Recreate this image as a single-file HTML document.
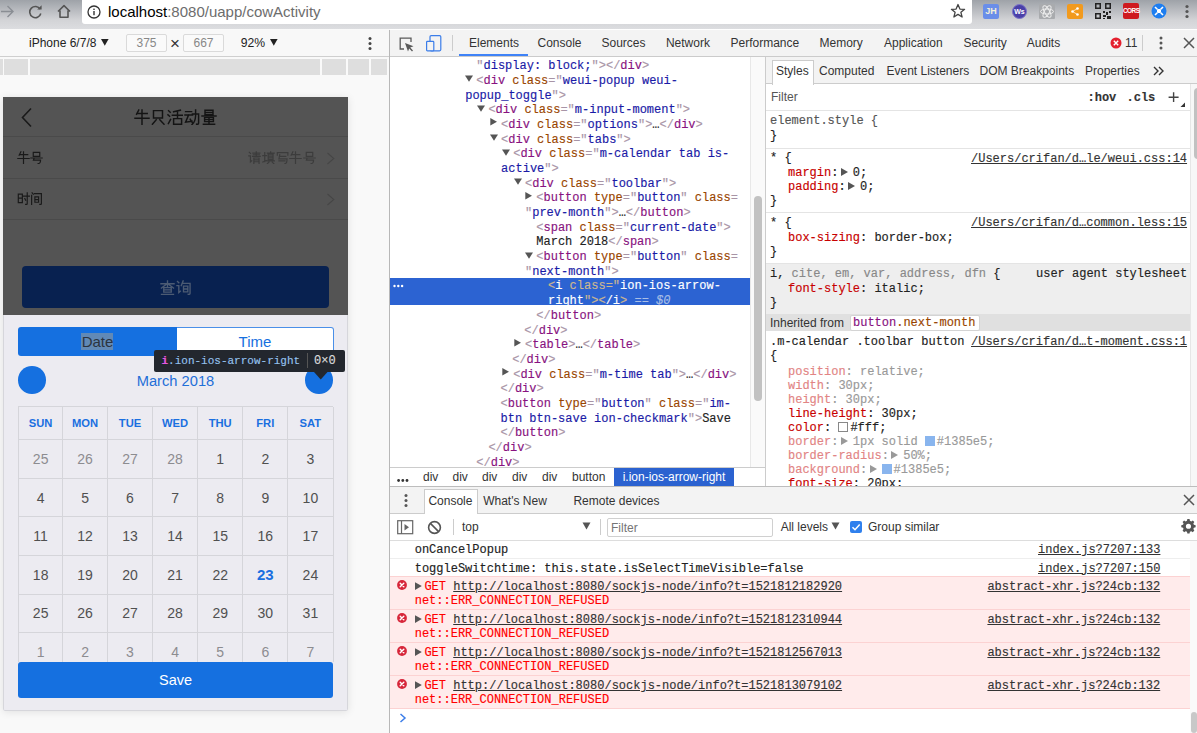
<!DOCTYPE html><html><head><meta charset="utf-8"><style>
*{margin:0;padding:0;box-sizing:border-box}
html,body{width:1197px;height:733px;overflow:hidden;background:#fff;position:relative;font-family:"Liberation Sans",sans-serif;}
.a{position:absolute}
.m{-webkit-text-stroke:0.15px;font-family:"Liberation Mono",monospace;font-size:12px;white-space:pre;position:absolute;line-height:14px}
.s{font-family:"Liberation Sans",sans-serif;white-space:pre;position:absolute}
.tg{color:#881280}.at{color:#994500}.av{color:#1a1aa6}.tx{color:#222}
.pn{color:#c80000}.pv{color:#222}
.dim{opacity:.55}
</style></head><body>
<div class="a" style="left:0;top:0;width:1197px;height:30px;background:linear-gradient(#9ea2a8 0%,#d3d4d7 70%,#dcdde0 100%);border-bottom:1px solid #c4c5c8"></div>
<div class="a" style="left:82px;top:0;width:890px;height:24px;background:#fff;border-radius:0 0 3px 3px"></div>
<svg class="a" style="left:0;top:4px" width="16" height="15" viewBox="0 0 16 15"><path d="M1 7.5H13M7.5 2L13 7.5L7.5 13" fill="none" stroke="#8a8e94" stroke-width="1.4"/></svg>
<svg class="a" style="left:28px;top:4px" width="16" height="15" viewBox="0 0 16 15"><path d="M12.2 5.2A5.6 5.6 0 1 0 12.8 9.5" fill="none" stroke="#555" stroke-width="1.6"/><path d="M9.2 5.6L13.6 5.6L13.6 1.2Z" fill="#555"/></svg>
<svg class="a" style="left:56px;top:4px" width="16" height="15" viewBox="0 0 16 15"><path d="M2 7.5L8 1.6L14 7.5M4 6.5V13.2H12V6.5" fill="none" stroke="#555" stroke-width="1.6" stroke-linejoin="round"/></svg>
<svg class="a" style="left:87px;top:5px" width="14" height="14" viewBox="0 0 14 14"><circle cx="7" cy="7" r="6" fill="none" stroke="#333" stroke-width="1.3"/><rect x="6.3" y="6" width="1.4" height="4.2" fill="#333"/><rect x="6.3" y="3.6" width="1.4" height="1.4" fill="#333"/></svg>
<div class="s" style="left:108px;top:2px;font-size:15px;line-height:20px;color:#000">localhost<span style="color:#6d6d6d">:8080/uapp/cowActivity</span></div>
<svg class="a" style="left:950px;top:3px" width="16" height="16" viewBox="0 0 16 16"><path d="M8 1.5L9.9 6.1L14.6 6.3L10.9 9.3L12.1 14L8 11.4L3.9 14L5.1 9.3L1.4 6.3L6.1 6.1Z" fill="none" stroke="#444" stroke-width="1.3" stroke-linejoin="round"/></svg>
<div class="a" style="left:983px;top:4px;width:16px;height:15px;background:#6a8ee9;border-radius:2px;color:#f4f0d8;font-size:9px;font-weight:bold;line-height:15px;text-align:center">JH</div>
<div class="a" style="left:1012px;top:4px;width:15px;height:15px;background:#4a40a8;border-radius:50%;color:#fff;font-size:7px;font-weight:bold;line-height:13px;text-align:center;border:1px solid #7c74c8">Ws</div>
<div class="a" style="left:1039px;top:4px;width:16px;height:15px;background:#a9abae;border-radius:1px"></div>
<svg class="a" style="left:1039px;top:4px" width="16" height="15" viewBox="0 0 16 15"><g fill="none" stroke="#eee" stroke-width="1"><ellipse cx="8" cy="7.5" rx="6.5" ry="2.5"/><ellipse cx="8" cy="7.5" rx="6.5" ry="2.5" transform="rotate(60 8 7.5)"/><ellipse cx="8" cy="7.5" rx="6.5" ry="2.5" transform="rotate(120 8 7.5)"/></g></svg>
<div class="a" style="left:1067px;top:4px;width:16px;height:15px;background:#f29a1d;border-radius:2px"></div>
<svg class="a" style="left:1067px;top:4px" width="16" height="15" viewBox="0 0 16 15"><path d="M10.5 4.5L5.5 7.5L10.5 10.5" fill="none" stroke="#fde3b8" stroke-width="1"/><circle cx="10.5" cy="4.5" r="1.3" fill="#fff"/><circle cx="5.5" cy="7.5" r="1.3" fill="#fff"/><circle cx="10.5" cy="10.5" r="1.3" fill="#fff"/></svg>
<svg class="a" style="left:1095px;top:3px" width="16" height="16" viewBox="0 0 16 16"><g fill="#222"><path d="M0 0h6v6H0zM1.5 1.5v3h3v-3z" fill-rule="evenodd"/><path d="M10 0h6v6h-6zM11.5 1.5v3h3v-3z" fill-rule="evenodd"/><path d="M0 10h6v6H0zM1.5 11.5v3h3v-3z" fill-rule="evenodd"/><rect x="8" y="8" width="2" height="2"/><rect x="11" y="9" width="2" height="3"/><rect x="14" y="8" width="2" height="2"/><rect x="8" y="12" width="3" height="2"/><rect x="12" y="13" width="4" height="3"/><rect x="8" y="15" width="2" height="1"/></g></svg>
<div class="a" style="left:1123px;top:3px;width:16px;height:16px;background:#cf1a1f;border-radius:2px;color:#fff;font-size:6.5px;font-weight:bold;line-height:16px;text-align:center;letter-spacing:-0.6px">CORS</div>
<svg class="a" style="left:1151px;top:3px" width="16" height="16" viewBox="0 0 16 16"><circle cx="8" cy="8" r="7.5" fill="#1e7ef0"/><path d="M4 4L6.3 6.3M12 4L9.7 6.3M4 12L6.3 9.7M12 12L9.7 9.7" stroke="#fff" stroke-width="1.6"/><rect x="6" y="6" width="4" height="4" rx="1" fill="#fff"/></svg>
<svg class="a" style="left:1183px;top:4px" width="8" height="16" viewBox="0 0 8 16"><g fill="#555"><circle cx="4" cy="2.5" r="1.6"/><circle cx="4" cy="7.5" r="1.6"/><circle cx="4" cy="12.5" r="1.6"/></g></svg>
<div class="a" style="left:0;top:29px;width:390px;height:704px;background:#f9f9f9"></div>
<div class="a" style="left:0;top:30px;width:389px;height:27px;background:#f8f8f8;border-bottom:1px solid #cfcfcf"></div>
<div class="s" style="left:29px;top:35px;font-size:12px;line-height:16px;color:#222">iPhone 6/7/8</div>
<svg class="a" style="left:101.2px;top:39px" width="8" height="7" viewBox="0 0 8 7"><path d="M0 0H7.6L3.8 6.8Z" fill="#222"/></svg>
<div class="a" style="left:126px;top:34px;width:41px;height:18px;border:1px solid #dadada;border-radius:2px;background:#fafafa;color:#888;font-size:12px;line-height:16px;text-align:center">375</div>
<div class="s" style="left:170px;top:35px;font-size:17px;line-height:18px;color:#333">×</div>
<div class="a" style="left:183px;top:34px;width:41px;height:18px;border:1px solid #dadada;border-radius:2px;background:#fafafa;color:#888;font-size:12px;line-height:16px;text-align:center">667</div>
<div class="s" style="left:240.8px;top:35px;font-size:12.2px;line-height:16px;color:#222">92%</div>
<svg class="a" style="left:270.2px;top:39px" width="8" height="7" viewBox="0 0 8 7"><path d="M0 0H7.6L3.8 6.8Z" fill="#222"/></svg>
<svg class="a" style="left:366px;top:36px" width="8" height="15" viewBox="0 0 8 15"><g fill="#444"><circle cx="4" cy="2.5" r="1.5"/><circle cx="4" cy="7.5" r="1.5"/><circle cx="4" cy="12.5" r="1.5"/></g></svg>
<div class="a" style="left:0;top:59px;width:387px;height:16px;background:#dedede"></div>
<div class="a" style="left:2.6px;top:59px;width:1.5px;height:16px;background:#fafafa"></div>
<div class="a" style="left:28.3px;top:59px;width:1.5px;height:16px;background:#fafafa"></div>
<div class="a" style="left:320.2px;top:59px;width:1.5px;height:16px;background:#fafafa"></div>
<div class="a" style="left:346.2px;top:59px;width:1.5px;height:16px;background:#fafafa"></div>
<div class="a" style="left:369.3px;top:59px;width:1.5px;height:16px;background:#fafafa"></div>
<div class="a" style="left:389px;top:30px;width:1px;height:703px;background:#b8b8b8"></div>
<div class="a" style="left:3px;top:97px;width:345px;height:613.5px;background:#ecebf1;box-shadow:0 1px 8px rgba(0,0,0,.10);overflow:hidden;border-radius:0 0 2px 2px" id="mob">
<div class="a" style="left:0;top:0;width:345px;height:218px;background:#545454"></div>
<div class="a" style="left:0;top:39px;width:345px;height:1px;background:#4a4a4a"></div>
<div class="a" style="left:0;top:81px;width:345px;height:1px;background:#4a4a4a"></div>
<div class="a" style="left:0;top:122px;width:345px;height:1px;background:#4a4a4a"></div>
<div class="a" style="left:0;top:218px;width:345px;height:395.5px;border:1px solid #d6d6db;border-top:none;border-radius:0 0 2px 2px"></div>
<svg class="a" style="left:16.6px;top:10px" width="14" height="21" viewBox="0 0 14 21"><path d="M11 1.5L2.5 10.5L11 19.5" fill="none" stroke="#1a1a1a" stroke-width="1.6"/></svg>
<div class="a" style="left:19px;top:169px;width:307px;height:41.8px;background:#082150;border-radius:4px"></div>
</div>
<svg class="a" style="left:133.7px;top:108.8px" width="16.0" height="16.0" viewBox="0 0 16 16"><path d="M4.8 1L2.6 5.2M3.4 4.4H13.2M1 9.2H15M8 1V15.6" fill="none" stroke="#141414" stroke-width="1.45" stroke-linecap="square"/></svg><svg class="a" style="left:150.4px;top:108.8px" width="16.0" height="16.0" viewBox="0 0 16 16"><path d="M3.5 1.6H12.5V9H3.5ZM6.2 10.8L2.4 15.2M9.8 10.8L14 15.2" fill="none" stroke="#141414" stroke-width="1.45" stroke-linecap="square"/></svg><svg class="a" style="left:167.1px;top:108.8px" width="16.0" height="16.0" viewBox="0 0 16 16"><path d="M1.6 1.8L3.2 3.2M1 5.8L2.6 7.2M1.4 14.6L3.6 10.4M13.4 1.2L6.6 2.8M5.4 6.2H15.6M10.5 2.6V9.6M6.6 9.6H14.6V15.2H6.6Z" fill="none" stroke="#141414" stroke-width="1.45" stroke-linecap="square"/></svg><svg class="a" style="left:183.8px;top:108.8px" width="16.0" height="16.0" viewBox="0 0 16 16"><path d="M1.6 2.6H7.6M1 6H8.6M4.6 6L1.6 13.2L8 12.2M6.2 10.2L8.2 13.4M8.4 5H14.6V14Q14.6 15.6 12.6 15.2M11.6 1V7Q11.2 13 8 15.6" fill="none" stroke="#141414" stroke-width="1.45" stroke-linecap="square"/></svg><svg class="a" style="left:200.5px;top:108.8px" width="16.0" height="16.0" viewBox="0 0 16 16"><path d="M4 1.2H12V5.6H4ZM4 3.4H12M1 7H15M3.6 8.6H12.4V12.6H3.6ZM3.6 10.6H12.4M8 8.6V15.2M2.4 15.2H13.6" fill="none" stroke="#141414" stroke-width="1.45" stroke-linecap="square"/></svg>
<div class="s" style="left:133.7px;top:108.8px;font-size:16px;line-height:16px;color:transparent">牛只活动量</div>
<div class="s" style="left:16.7px;top:151.2px;font-size:13px;line-height:13px;color:transparent">牛号</div>
<div class="s" style="left:248.3px;top:151.2px;font-size:13px;line-height:13px;color:transparent">请填写牛号</div>
<div class="s" style="left:16.7px;top:192.2px;font-size:13px;line-height:13px;color:transparent">时间</div>
<div class="s" style="left:159.6px;top:280.2px;font-size:15px;line-height:15px;color:transparent">查询</div>
<svg class="a" style="left:16.7px;top:151.2px" width="13.0" height="13.0" viewBox="0 0 16 16"><path d="M4.8 1L2.6 5.2M3.4 4.4H13.2M1 9.2H15M8 1V15.6" fill="none" stroke="#1a1a1a" stroke-width="1.45" stroke-linecap="square"/></svg><svg class="a" style="left:30.4px;top:151.2px" width="13.0" height="13.0" viewBox="0 0 16 16"><path d="M4 1.6H12V6.6H4ZM1 8.6H15M5.2 8.6L4.2 11.2H13Q13 15.6 10 15.4" fill="none" stroke="#1a1a1a" stroke-width="1.45" stroke-linecap="square"/></svg>
<svg class="a" style="left:248.3px;top:151.2px" width="13.0" height="13.0" viewBox="0 0 16 16"><path d="M1.6 1.6L3 3M1 6H3V13.4L4.6 12M6 2.6H14.6M6.6 4.6H14M5.6 6.6H15M10.2 1V6.6M7.2 8.6H13.6V15.6M7.2 15.6V8.6M7.2 11H13.6M7.2 13.2H13.6" fill="none" stroke="#3c3c3c" stroke-width="1.45" stroke-linecap="square"/></svg><svg class="a" style="left:262.0px;top:151.2px" width="13.0" height="13.0" viewBox="0 0 16 16"><path d="M1 5.6H5.6M3.4 2V13M1 13.6L5.6 11.6M6.6 2.6H15M10.6 1V4M7.6 4H13.6V10.6H7.6ZM7.6 6.2H13.6M7.6 8.4H13.6M6 12.2H15.6M8.6 13.6L6.6 15.6M12.6 13.6L14.6 15.6" fill="none" stroke="#3c3c3c" stroke-width="1.45" stroke-linecap="square"/></svg><svg class="a" style="left:275.7px;top:151.2px" width="13.0" height="13.0" viewBox="0 0 16 16"><path d="M1.6 5V2H14.6V5M4.6 4.6L3.6 9.6H13.6Q13.6 15.6 11 15.4M3.6 12.2H11M5 6.6H12" fill="none" stroke="#3c3c3c" stroke-width="1.45" stroke-linecap="square"/></svg><svg class="a" style="left:289.4px;top:151.2px" width="13.0" height="13.0" viewBox="0 0 16 16"><path d="M4.8 1L2.6 5.2M3.4 4.4H13.2M1 9.2H15M8 1V15.6" fill="none" stroke="#3c3c3c" stroke-width="1.45" stroke-linecap="square"/></svg><svg class="a" style="left:303.1px;top:151.2px" width="13.0" height="13.0" viewBox="0 0 16 16"><path d="M4 1.6H12V6.6H4ZM1 8.6H15M5.2 8.6L4.2 11.2H13Q13 15.6 10 15.4" fill="none" stroke="#3c3c3c" stroke-width="1.45" stroke-linecap="square"/></svg>
<svg class="a" style="left:16.7px;top:192.2px" width="13.0" height="13.0" viewBox="0 0 16 16"><path d="M1.6 2.6H6.6V13H1.6ZM1.6 7.6H6.6M7.6 5H15.6M12.6 1V14.4Q12.6 15.6 10.6 15.2M9.6 8L10.6 10.2" fill="none" stroke="#1a1a1a" stroke-width="1.45" stroke-linecap="square"/></svg><svg class="a" style="left:30.4px;top:192.2px" width="13.0" height="13.0" viewBox="0 0 16 16"><path d="M2.6 1L4 2.6M2 4V15.6M5.6 2H14V14.4Q14 15.6 12 15.2M6 6H10.6V12.6H6ZM6 9.3H10.6" fill="none" stroke="#1a1a1a" stroke-width="1.45" stroke-linecap="square"/></svg>
<svg class="a" style="left:159.6px;top:280.2px" width="15.0" height="15.0" viewBox="0 0 16 16"><path d="M1 4H15M8 1V8M7.6 4L1.6 8.6M8.4 4L14.4 8.6M4 8.2H12V13H4ZM4 10.6H12M1.6 15.4H14.4" fill="none" stroke="#4c5b73" stroke-width="1.45" stroke-linecap="square"/></svg><svg class="a" style="left:176.1px;top:280.2px" width="15.0" height="15.0" viewBox="0 0 16 16"><path d="M1.6 1.6L3 3M1 6H3V13.4L4.6 12M7.6 1L5.6 6M7 3.6H15V14Q15 15.6 13 15.2M8 6.6H12.6V12.6H8ZM8 9.6H12.6" fill="none" stroke="#4c5b73" stroke-width="1.45" stroke-linecap="square"/></svg>
<svg class="a" style="left:326px;top:152.0px" width="10" height="13" viewBox="0 0 10 13"><path d="M1.5 1L7.8 6.5L1.5 12" fill="none" stroke="#464646" stroke-width="1.1"/></svg>
<svg class="a" style="left:326px;top:193.0px" width="10" height="13" viewBox="0 0 10 13"><path d="M1.5 1L7.8 6.5L1.5 12" fill="none" stroke="#464646" stroke-width="1.1"/></svg>
<div class="a" style="left:18px;top:327px;width:159px;height:29px;background:#1570e0;border-radius:3px 0 0 3px"></div>
<div class="a" style="left:177px;top:327px;width:156.7px;height:29px;background:#fff;border:1px solid #4a8fe8;border-left:none;border-radius:0 3px 3px 0"></div>
<div class="a" style="left:81px;top:333px;width:32px;height:17px;background:#6189b6"></div>
<div class="s" style="left:18px;top:333px;width:159px;text-align:center;font-size:15px;line-height:17px;color:#2b3440">Date</div>
<div class="s" style="left:177px;top:333px;width:156px;text-align:center;font-size:15px;line-height:17px;color:#1570e0">Time</div>
<div class="a" style="left:18px;top:366px;width:27.6px;height:27.6px;border-radius:50%;background:#1570e0"></div>
<div class="a" style="left:305.4px;top:366px;width:27.6px;height:27.6px;border-radius:50%;background:#1570e0"></div>
<div class="s" style="left:18px;top:372px;width:315px;text-align:center;font-size:14.7px;line-height:18px;color:#1f6fd8">March 2018</div>
<div class="a" style="left:18.1px;top:406.5px;width:1px;height:256px;background:#d5d5da"></div>
<div class="a" style="left:62.2px;top:406.5px;width:1px;height:256px;background:#d5d5da"></div>
<div class="a" style="left:107.0px;top:406.5px;width:1px;height:256px;background:#d5d5da"></div>
<div class="a" style="left:152.0px;top:406.5px;width:1px;height:256px;background:#d5d5da"></div>
<div class="a" style="left:197.1px;top:406.5px;width:1px;height:256px;background:#d5d5da"></div>
<div class="a" style="left:242.3px;top:406.5px;width:1px;height:256px;background:#d5d5da"></div>
<div class="a" style="left:287.3px;top:406.5px;width:1px;height:256px;background:#d5d5da"></div>
<div class="a" style="left:332.5px;top:406.5px;width:1px;height:256px;background:#d5d5da"></div>
<div class="a" style="left:18.1px;top:406.0px;width:315.4px;height:1px;background:#d5d5da"></div>
<div class="a" style="left:18.1px;top:438.9px;width:315.4px;height:1px;background:#d5d5da"></div>
<div class="a" style="left:18.1px;top:477.8px;width:315.4px;height:1px;background:#d5d5da"></div>
<div class="a" style="left:18.1px;top:516.1px;width:315.4px;height:1px;background:#d5d5da"></div>
<div class="a" style="left:18.1px;top:554.9px;width:315.4px;height:1px;background:#d5d5da"></div>
<div class="a" style="left:18.1px;top:593.6px;width:315.4px;height:1px;background:#d5d5da"></div>
<div class="a" style="left:18.1px;top:632.0px;width:315.4px;height:1px;background:#d5d5da"></div>
<div class="s" style="left:18.6px;top:416.0px;width:44.1px;text-align:center;font-size:11.2px;font-weight:bold;line-height:14px;color:#1a6fe0">SUN</div>
<div class="s" style="left:62.7px;top:416.0px;width:44.8px;text-align:center;font-size:11.2px;font-weight:bold;line-height:14px;color:#1a6fe0">MON</div>
<div class="s" style="left:107.5px;top:416.0px;width:45.0px;text-align:center;font-size:11.2px;font-weight:bold;line-height:14px;color:#1a6fe0">TUE</div>
<div class="s" style="left:152.5px;top:416.0px;width:45.1px;text-align:center;font-size:11.2px;font-weight:bold;line-height:14px;color:#1a6fe0">WED</div>
<div class="s" style="left:197.6px;top:416.0px;width:45.2px;text-align:center;font-size:11.2px;font-weight:bold;line-height:14px;color:#1a6fe0">THU</div>
<div class="s" style="left:242.8px;top:416.0px;width:45.0px;text-align:center;font-size:11.2px;font-weight:bold;line-height:14px;color:#1a6fe0">FRI</div>
<div class="s" style="left:287.8px;top:416.0px;width:45.2px;text-align:center;font-size:11.2px;font-weight:bold;line-height:14px;color:#1a6fe0">SAT</div>
<div class="s" style="left:18.6px;top:450.9px;width:44.1px;text-align:center;font-size:14px;line-height:16px;color:#8c8c90;">25</div>
<div class="s" style="left:62.7px;top:450.9px;width:44.8px;text-align:center;font-size:14px;line-height:16px;color:#8c8c90;">26</div>
<div class="s" style="left:107.5px;top:450.9px;width:45.0px;text-align:center;font-size:14px;line-height:16px;color:#8c8c90;">27</div>
<div class="s" style="left:152.5px;top:450.9px;width:45.1px;text-align:center;font-size:14px;line-height:16px;color:#8c8c90;">28</div>
<div class="s" style="left:197.6px;top:450.9px;width:45.2px;text-align:center;font-size:14px;line-height:16px;color:#505050;">1</div>
<div class="s" style="left:242.8px;top:450.9px;width:45.0px;text-align:center;font-size:14px;line-height:16px;color:#505050;">2</div>
<div class="s" style="left:287.8px;top:450.9px;width:45.2px;text-align:center;font-size:14px;line-height:16px;color:#505050;">3</div>
<div class="s" style="left:18.6px;top:489.5px;width:44.1px;text-align:center;font-size:14px;line-height:16px;color:#505050;">4</div>
<div class="s" style="left:62.7px;top:489.5px;width:44.8px;text-align:center;font-size:14px;line-height:16px;color:#505050;">5</div>
<div class="s" style="left:107.5px;top:489.5px;width:45.0px;text-align:center;font-size:14px;line-height:16px;color:#505050;">6</div>
<div class="s" style="left:152.5px;top:489.5px;width:45.1px;text-align:center;font-size:14px;line-height:16px;color:#505050;">7</div>
<div class="s" style="left:197.6px;top:489.5px;width:45.2px;text-align:center;font-size:14px;line-height:16px;color:#505050;">8</div>
<div class="s" style="left:242.8px;top:489.5px;width:45.0px;text-align:center;font-size:14px;line-height:16px;color:#505050;">9</div>
<div class="s" style="left:287.8px;top:489.5px;width:45.2px;text-align:center;font-size:14px;line-height:16px;color:#505050;">10</div>
<div class="s" style="left:18.6px;top:528.0px;width:44.1px;text-align:center;font-size:14px;line-height:16px;color:#505050;">11</div>
<div class="s" style="left:62.7px;top:528.0px;width:44.8px;text-align:center;font-size:14px;line-height:16px;color:#505050;">12</div>
<div class="s" style="left:107.5px;top:528.0px;width:45.0px;text-align:center;font-size:14px;line-height:16px;color:#505050;">13</div>
<div class="s" style="left:152.5px;top:528.0px;width:45.1px;text-align:center;font-size:14px;line-height:16px;color:#505050;">14</div>
<div class="s" style="left:197.6px;top:528.0px;width:45.2px;text-align:center;font-size:14px;line-height:16px;color:#505050;">15</div>
<div class="s" style="left:242.8px;top:528.0px;width:45.0px;text-align:center;font-size:14px;line-height:16px;color:#505050;">16</div>
<div class="s" style="left:287.8px;top:528.0px;width:45.2px;text-align:center;font-size:14px;line-height:16px;color:#505050;">17</div>
<div class="s" style="left:18.6px;top:566.8px;width:44.1px;text-align:center;font-size:14px;line-height:16px;color:#505050;">18</div>
<div class="s" style="left:62.7px;top:566.8px;width:44.8px;text-align:center;font-size:14px;line-height:16px;color:#505050;">19</div>
<div class="s" style="left:107.5px;top:566.8px;width:45.0px;text-align:center;font-size:14px;line-height:16px;color:#505050;">20</div>
<div class="s" style="left:152.5px;top:566.8px;width:45.1px;text-align:center;font-size:14px;line-height:16px;color:#505050;">21</div>
<div class="s" style="left:197.6px;top:566.8px;width:45.2px;text-align:center;font-size:14px;line-height:16px;color:#505050;">22</div>
<div class="s" style="left:242.8px;top:566.8px;width:45.0px;text-align:center;font-size:14px;line-height:16px;color:#1a6fe0;font-weight:bold;font-size:15px;">23</div>
<div class="s" style="left:287.8px;top:566.8px;width:45.2px;text-align:center;font-size:14px;line-height:16px;color:#505050;">24</div>
<div class="s" style="left:18.6px;top:605.3px;width:44.1px;text-align:center;font-size:14px;line-height:16px;color:#505050;">25</div>
<div class="s" style="left:62.7px;top:605.3px;width:44.8px;text-align:center;font-size:14px;line-height:16px;color:#505050;">26</div>
<div class="s" style="left:107.5px;top:605.3px;width:45.0px;text-align:center;font-size:14px;line-height:16px;color:#505050;">27</div>
<div class="s" style="left:152.5px;top:605.3px;width:45.1px;text-align:center;font-size:14px;line-height:16px;color:#505050;">28</div>
<div class="s" style="left:197.6px;top:605.3px;width:45.2px;text-align:center;font-size:14px;line-height:16px;color:#505050;">29</div>
<div class="s" style="left:242.8px;top:605.3px;width:45.0px;text-align:center;font-size:14px;line-height:16px;color:#505050;">30</div>
<div class="s" style="left:287.8px;top:605.3px;width:45.2px;text-align:center;font-size:14px;line-height:16px;color:#505050;">31</div>
<div class="s" style="left:18.6px;top:643.8px;width:44.1px;text-align:center;font-size:14px;line-height:16px;color:#8c8c90;">1</div>
<div class="s" style="left:62.7px;top:643.8px;width:44.8px;text-align:center;font-size:14px;line-height:16px;color:#8c8c90;">2</div>
<div class="s" style="left:107.5px;top:643.8px;width:45.0px;text-align:center;font-size:14px;line-height:16px;color:#8c8c90;">3</div>
<div class="s" style="left:152.5px;top:643.8px;width:45.1px;text-align:center;font-size:14px;line-height:16px;color:#8c8c90;">4</div>
<div class="s" style="left:197.6px;top:643.8px;width:45.2px;text-align:center;font-size:14px;line-height:16px;color:#8c8c90;">5</div>
<div class="s" style="left:242.8px;top:643.8px;width:45.0px;text-align:center;font-size:14px;line-height:16px;color:#8c8c90;">6</div>
<div class="s" style="left:287.8px;top:643.8px;width:45.2px;text-align:center;font-size:14px;line-height:16px;color:#8c8c90;">7</div>
<div class="a" style="left:4px;top:662px;width:343px;height:47px;background:#ecebf1"></div>
<div class="a" style="left:18px;top:662px;width:315px;height:36px;background:#1570e0;border-radius:3px"></div>
<div class="s" style="left:18px;top:671px;width:315px;text-align:center;font-size:14.5px;line-height:18px;color:#fff">Save</div>
<div class="a" style="left:154px;top:350px;width:191px;height:22px;background:#23272e;border-radius:2px"></div>
<svg class="a" style="left:314px;top:371.5px" width="14" height="8" viewBox="0 0 14 8"><path d="M0 0H13.5L6.75 7.5Z" fill="#23272e"/></svg>
<div class="m" style="left:161.5px;top:353px;font-size:11px;line-height:16px;color:#95c2ee"><span style="color:#e458e0;font-weight:bold">i</span>.ion-ios-arrow-right</div>
<div class="a" style="left:307px;top:353px;width:1px;height:15px;background:#555"></div>
<div class="m" style="left:314px;top:353px;font-size:12px;line-height:16px;color:#dcdcdc">0×0</div>
<div class="a" style="left:390px;top:29px;width:807px;height:704px;background:#fff"></div>
<div class="a" style="left:390px;top:30px;width:807px;height:27px;background:#f3f3f3;border-bottom:1px solid #cbcbcb"></div>
<svg class="a" style="left:398px;top:36px" width="17" height="16" viewBox="0 0 17 16"><path d="M6 13H2.2V2.2H13V6" fill="none" stroke="#5a5a5a" stroke-width="1.3"/><path d="M7 7L15.5 10.2L12.2 11.4L15 14.4L14 15.4L11.2 12.4L10 15.6Z" fill="#5a5a5a"/></svg>
<svg class="a" style="left:425px;top:34px" width="18" height="18" viewBox="0 0 18 18"><rect x="5" y="1.6" width="10.8" height="15.2" rx="1.2" fill="none" stroke="#3b7de9" stroke-width="1.2"/><rect x="1.6" y="7.4" width="7.2" height="9.4" rx="0.8" fill="#f3f3f3" stroke="#3b7de9" stroke-width="1.2"/></svg>
<div class="a" style="left:452px;top:35px;width:1px;height:16px;background:#ccc"></div>
<div class="s" style="left:469.0px;top:35px;font-size:12px;line-height:16px;color:#333">Elements</div>
<div class="s" style="left:537.5px;top:35px;font-size:12px;line-height:16px;color:#333">Console</div>
<div class="s" style="left:601.5px;top:35px;font-size:12px;line-height:16px;color:#333">Sources</div>
<div class="s" style="left:665.9px;top:35px;font-size:12px;line-height:16px;color:#333">Network</div>
<div class="s" style="left:730.5px;top:35px;font-size:12px;line-height:16px;color:#333">Performance</div>
<div class="s" style="left:819.5px;top:35px;font-size:12px;line-height:16px;color:#333">Memory</div>
<div class="s" style="left:884.0px;top:35px;font-size:12px;line-height:16px;color:#333">Application</div>
<div class="s" style="left:963.4px;top:35px;font-size:12px;line-height:16px;color:#333">Security</div>
<div class="s" style="left:1026.8px;top:35px;font-size:12px;line-height:16px;color:#333">Audits</div>
<div class="a" style="left:459px;top:54px;width:69px;height:2px;background:#3e82f7"></div>
<svg class="a" style="left:1110px;top:37px" width="12" height="12" viewBox="0 0 12 12"><circle cx="6" cy="6" r="5.5" fill="#e4202e"/><path d="M3.8 3.8L8.2 8.2M8.2 3.8L3.8 8.2" stroke="#fff" stroke-width="1.4"/></svg>
<div class="s" style="left:1125px;top:35px;font-size:12px;line-height:16px;color:#333">11</div>
<div class="a" style="left:1142px;top:35px;width:1px;height:16px;background:#ccc"></div>
<svg class="a" style="left:1157px;top:35px" width="8" height="16" viewBox="0 0 8 16"><g fill="#555"><circle cx="4" cy="3" r="1.5"/><circle cx="4" cy="8" r="1.5"/><circle cx="4" cy="13" r="1.5"/></g></svg>
<svg class="a" style="left:1183px;top:37px" width="12" height="12" viewBox="0 0 12 12"><path d="M1 1L11 11M11 1L1 11" stroke="#555" stroke-width="1.5"/></svg>
<div class="a" style="left:390px;top:277.5px;width:360px;height:27.3px;background:#2c63d2"></div>
<svg class="a" style="left:393px;top:284px" width="11" height="4" viewBox="0 0 11 4"><g fill="#fff"><circle cx="1.5" cy="2" r="1.2"/><circle cx="5.3" cy="2" r="1.2"/><circle cx="9.1" cy="2" r="1.2"/></g></svg>
<div class="m" style="left:476.3px;top:59.1px;line-height:14px"><span style="color:#a894a6">"</span><span style="color:#1a1aa6">display: block;</span><span style="color:#a894a6">"&gt;&lt;/</span><span style="color:#881280">div</span><span style="color:#a894a6">&gt;</span></div>
<svg class="a" style="left:465.1px;top:75.4px" width="8" height="8" viewBox="0 0 8 8"><path d="M0 0.4H8L4 6.8Z" fill="#555"/></svg>
<div class="m" style="left:476.3px;top:73.8px;line-height:14px"><span style="color:#a894a6">&lt;</span><span style="color:#881280">div</span><span style="color:#222"> </span><span style="color:#994500">class</span><span style="color:#a894a6">="</span><span style="color:#1a1aa6">weui-popup weui-</span></div>
<div class="m" style="left:465.2px;top:88.5px;line-height:14px"><span style="color:#1a1aa6">popup_toggle</span><span style="color:#a894a6">"&gt;</span></div>
<svg class="a" style="left:477.2px;top:104.8px" width="8" height="8" viewBox="0 0 8 8"><path d="M0 0.4H8L4 6.8Z" fill="#555"/></svg>
<div class="m" style="left:488.4px;top:103.2px;line-height:14px"><span style="color:#a894a6">&lt;</span><span style="color:#881280">div</span><span style="color:#222"> </span><span style="color:#994500">class</span><span style="color:#a894a6">="</span><span style="color:#1a1aa6">m-input-moment</span><span style="color:#a894a6">"&gt;</span></div>
<svg class="a" style="left:489.9px;top:118.3px" width="8" height="8" viewBox="0 0 8 8"><path d="M0.3 0L7 3.8L0.3 7.6Z" fill="#555"/></svg>
<div class="m" style="left:501.1px;top:117.9px;line-height:14px"><span style="color:#a894a6">&lt;</span><span style="color:#881280">div</span><span style="color:#222"> </span><span style="color:#994500">class</span><span style="color:#a894a6">="</span><span style="color:#1a1aa6">options</span><span style="color:#a894a6">"&gt;</span><span style="color:#222">…</span><span style="color:#a894a6">&lt;/</span><span style="color:#881280">div</span><span style="color:#a894a6">&gt;</span></div>
<svg class="a" style="left:489.9px;top:134.2px" width="8" height="8" viewBox="0 0 8 8"><path d="M0 0.4H8L4 6.8Z" fill="#555"/></svg>
<div class="m" style="left:501.1px;top:132.6px;line-height:14px"><span style="color:#a894a6">&lt;</span><span style="color:#881280">div</span><span style="color:#222"> </span><span style="color:#994500">class</span><span style="color:#a894a6">="</span><span style="color:#1a1aa6">tabs</span><span style="color:#a894a6">"&gt;</span></div>
<svg class="a" style="left:502.0px;top:148.8px" width="8" height="8" viewBox="0 0 8 8"><path d="M0 0.4H8L4 6.8Z" fill="#555"/></svg>
<div class="m" style="left:513.2px;top:147.2px;line-height:14px"><span style="color:#a894a6">&lt;</span><span style="color:#881280">div</span><span style="color:#222"> </span><span style="color:#994500">class</span><span style="color:#a894a6">="</span><span style="color:#1a1aa6">m-calendar tab is-</span></div>
<div class="m" style="left:501.1px;top:161.9px;line-height:14px"><span style="color:#1a1aa6">active</span><span style="color:#a894a6">"&gt;</span></div>
<svg class="a" style="left:513.8px;top:178.2px" width="8" height="8" viewBox="0 0 8 8"><path d="M0 0.4H8L4 6.8Z" fill="#555"/></svg>
<div class="m" style="left:525.0px;top:176.6px;line-height:14px"><span style="color:#a894a6">&lt;</span><span style="color:#881280">div</span><span style="color:#222"> </span><span style="color:#994500">class</span><span style="color:#a894a6">="</span><span style="color:#1a1aa6">toolbar</span><span style="color:#a894a6">"&gt;</span></div>
<svg class="a" style="left:525.1px;top:191.7px" width="8" height="8" viewBox="0 0 8 8"><path d="M0.3 0L7 3.8L0.3 7.6Z" fill="#555"/></svg>
<div class="m" style="left:536.3px;top:191.3px;line-height:14px"><span style="color:#a894a6">&lt;</span><span style="color:#881280">button</span><span style="color:#222"> </span><span style="color:#994500">type</span><span style="color:#a894a6">="</span><span style="color:#1a1aa6">button</span><span style="color:#a894a6">"</span><span style="color:#222"> </span><span style="color:#994500">class</span><span style="color:#a894a6">=</span></div>
<div class="m" style="left:525.0px;top:206.0px;line-height:14px"><span style="color:#a894a6">"</span><span style="color:#1a1aa6">prev-month</span><span style="color:#a894a6">"&gt;</span><span style="color:#222">…</span><span style="color:#a894a6">&lt;/</span><span style="color:#881280">button</span><span style="color:#a894a6">&gt;</span></div>
<div class="m" style="left:536.3px;top:220.7px;line-height:14px"><span style="color:#a894a6">&lt;</span><span style="color:#881280">span</span><span style="color:#222"> </span><span style="color:#994500">class</span><span style="color:#a894a6">="</span><span style="color:#1a1aa6">current-date</span><span style="color:#a894a6">"&gt;</span></div>
<div class="m" style="left:536.3px;top:235.4px;line-height:14px"><span style="color:#222">March 2018</span><span style="color:#a894a6">&lt;/</span><span style="color:#881280">span</span><span style="color:#a894a6">&gt;</span></div>
<svg class="a" style="left:525.1px;top:251.7px" width="8" height="8" viewBox="0 0 8 8"><path d="M0 0.4H8L4 6.8Z" fill="#555"/></svg>
<div class="m" style="left:536.3px;top:250.1px;line-height:14px"><span style="color:#a894a6">&lt;</span><span style="color:#881280">button</span><span style="color:#222"> </span><span style="color:#994500">type</span><span style="color:#a894a6">="</span><span style="color:#1a1aa6">button</span><span style="color:#a894a6">"</span><span style="color:#222"> </span><span style="color:#994500">class</span><span style="color:#a894a6">=</span></div>
<div class="m" style="left:525.0px;top:264.8px;line-height:14px"><span style="color:#a894a6">"</span><span style="color:#1a1aa6">next-month</span><span style="color:#a894a6">"&gt;</span></div>
<div class="m" style="left:548.0px;top:279.4px;line-height:14px"><span style="color:#cdb88f">&lt;</span><span style="color:#fff">i</span><span style="color:#222"> </span><span style="color:#cdb88f">class</span><span style="color:#cdb88f">="</span><span style="color:#fff">ion-ios-arrow-</span></div>
<div class="m" style="left:548.0px;top:294.1px;line-height:14px"><span style="color:#fff">right</span><span style="color:#cdb88f">"&gt;</span><span style="color:#cdb88f">&lt;</span><span style="color:#fff">/i</span><span style="color:#cdb88f">&gt;</span><span style="color:#222"> </span><span style="color:#a9bfe6;font-style:italic">== $0</span></div>
<div class="m" style="left:536.3px;top:308.8px;line-height:14px"><span style="color:#a894a6">&lt;/</span><span style="color:#881280">button</span><span style="color:#a894a6">&gt;</span></div>
<div class="m" style="left:524.3px;top:323.5px;line-height:14px"><span style="color:#a894a6">&lt;/</span><span style="color:#881280">div</span><span style="color:#a894a6">&gt;</span></div>
<svg class="a" style="left:513.8px;top:338.6px" width="8" height="8" viewBox="0 0 8 8"><path d="M0.3 0L7 3.8L0.3 7.6Z" fill="#555"/></svg>
<div class="m" style="left:525.0px;top:338.2px;line-height:14px"><span style="color:#a894a6">&lt;</span><span style="color:#881280">table</span><span style="color:#a894a6">&gt;</span><span style="color:#222">…</span><span style="color:#a894a6">&lt;/</span><span style="color:#881280">table</span><span style="color:#a894a6">&gt;</span></div>
<div class="m" style="left:512.2px;top:352.9px;line-height:14px"><span style="color:#a894a6">&lt;/</span><span style="color:#881280">div</span><span style="color:#a894a6">&gt;</span></div>
<svg class="a" style="left:502.0px;top:368.0px" width="8" height="8" viewBox="0 0 8 8"><path d="M0.3 0L7 3.8L0.3 7.6Z" fill="#555"/></svg>
<div class="m" style="left:513.2px;top:367.6px;line-height:14px"><span style="color:#a894a6">&lt;</span><span style="color:#881280">div</span><span style="color:#222"> </span><span style="color:#994500">class</span><span style="color:#a894a6">="</span><span style="color:#1a1aa6">m-time tab</span><span style="color:#a894a6">"&gt;</span><span style="color:#222">…</span><span style="color:#a894a6">&lt;/</span><span style="color:#881280">div</span><span style="color:#a894a6">&gt;</span></div>
<div class="m" style="left:500.5px;top:382.3px;line-height:14px"><span style="color:#a894a6">&lt;/</span><span style="color:#881280">div</span><span style="color:#a894a6">&gt;</span></div>
<div class="m" style="left:500.5px;top:397.0px;line-height:14px"><span style="color:#a894a6">&lt;</span><span style="color:#881280">button</span><span style="color:#222"> </span><span style="color:#994500">type</span><span style="color:#a894a6">="</span><span style="color:#1a1aa6">button</span><span style="color:#a894a6">"</span><span style="color:#222"> </span><span style="color:#994500">class</span><span style="color:#a894a6">="</span><span style="color:#1a1aa6">im-</span></div>
<div class="m" style="left:500.5px;top:411.7px;line-height:14px"><span style="color:#1a1aa6">btn btn-save ion-checkmark</span><span style="color:#a894a6">"&gt;</span><span style="color:#222">Save</span></div>
<div class="m" style="left:500.5px;top:426.3px;line-height:14px"><span style="color:#a894a6">&lt;/</span><span style="color:#881280">button</span><span style="color:#a894a6">&gt;</span></div>
<div class="m" style="left:488.4px;top:441.0px;line-height:14px"><span style="color:#a894a6">&lt;/</span><span style="color:#881280">div</span><span style="color:#a894a6">&gt;</span></div>
<div class="m" style="left:476.3px;top:455.7px;line-height:14px"><span style="color:#a894a6">&lt;/</span><span style="color:#881280">div</span><span style="color:#a894a6">&gt;</span></div>
<div class="a" style="left:750px;top:57px;width:15px;height:410px;background:#fafafa;border-left:1px solid #e8e8e8"></div>
<div class="a" style="left:754px;top:196px;width:8px;height:205px;background:#c2c2c2;border-radius:4px"></div>
<div class="a" style="left:390px;top:467px;width:375px;height:19px;background:#fff;border-top:1px solid #ccc"></div>
<svg class="a" style="left:397px;top:478px" width="12" height="5" viewBox="0 0 12 5"><g fill="#333"><circle cx="1.6" cy="2.5" r="1.4"/><circle cx="5.8" cy="2.5" r="1.4"/><circle cx="10" cy="2.5" r="1.4"/></g></svg>
<div class="s" style="left:423.0px;top:469px;font-size:12px;line-height:16px;color:#333">div</div>
<div class="s" style="left:452.5px;top:469px;font-size:12px;line-height:16px;color:#333">div</div>
<div class="s" style="left:482.0px;top:469px;font-size:12px;line-height:16px;color:#333">div</div>
<div class="s" style="left:512.0px;top:469px;font-size:12px;line-height:16px;color:#333">div</div>
<div class="s" style="left:542.0px;top:469px;font-size:12px;line-height:16px;color:#333">div</div>
<div class="s" style="left:572.0px;top:469px;font-size:12px;line-height:16px;color:#333">button</div>
<div class="a" style="left:614px;top:468px;width:120px;height:18px;background:#2b62d0"></div>
<div class="s" style="left:614px;top:469px;width:120px;text-align:center;font-size:12px;line-height:16px;color:#fff">i.ion-ios-arrow-right</div>
<div class="a" style="left:765px;top:57px;width:1px;height:430px;background:#ccc"></div>
<div class="a" style="left:766px;top:57px;width:431px;height:27px;background:#f3f3f3;border-bottom:1px solid #ccc"></div>
<div class="a" style="left:771.5px;top:59.5px;width:42.5px;height:25px;background:#fff;border:1px solid #ccc;border-bottom:none"></div>
<div class="s" style="left:776.0px;top:63px;font-size:12px;line-height:16px;color:#333">Styles</div>
<div class="s" style="left:819.0px;top:63px;font-size:12px;line-height:16px;color:#333">Computed</div>
<div class="s" style="left:886.5px;top:63px;font-size:12px;line-height:16px;color:#333">Event Listeners</div>
<div class="s" style="left:979.5px;top:63px;font-size:12px;line-height:16px;color:#333">DOM Breakpoints</div>
<div class="s" style="left:1085.0px;top:63px;font-size:12px;line-height:16px;color:#333">Properties</div>
<svg class="a" style="left:1152.5px;top:65.5px" width="11" height="10" viewBox="0 0 11 10"><path d="M1 1L5 5L1 9M6 1L10 5L6 9" fill="none" stroke="#333" stroke-width="1.4"/></svg>
<div class="a" style="left:766px;top:110px;width:431px;height:1px;background:#e4e4e4"></div>
<div class="s" style="left:771px;top:89px;font-size:12px;line-height:16px;color:#555">Filter</div>
<div class="m" style="left:1087.5px;top:90px;font-size:12px;line-height:16px;color:#333;font-weight:bold">:hov</div>
<div class="m" style="left:1126.5px;top:90px;font-size:12px;line-height:16px;color:#333;font-weight:bold">.cls</div>
<svg class="a" style="left:1167px;top:91px" width="20" height="18" viewBox="0 0 20 18"><path d="M6.6 1.3V11M1.6 6.2H11.6" stroke="#444" stroke-width="1.4"/><path d="M18 11.5V16H13.5Z" fill="#333"/></svg>
<div class="m" style="left:770.0px;top:114.3px;line-height:14px;"><span style="color:#555">element.style {</span></div>
<div class="m" style="left:770.0px;top:129.0px;line-height:14px;"><span class="pv">}</span></div>
<div class="a" style="left:766px;top:147.5px;width:431px;height:1px;background:#e4e4e4"></div>
<div class="m" style="left:770.0px;top:151.3px;line-height:14px;"><span class="pv">* {</span></div>
<div class="m" style="left:971px;top:151.5px;line-height:14px;color:#333;text-decoration:underline">/Users/crifan/d…le/weui.css:14</div>
<div class="m" style="left:788.0px;top:166.0px;line-height:14px;"><span class="pn">margin</span><span class="pv">:</span><span style="display:inline-block;width:7.2px;height:8px;position:relative"><span style="position:absolute;left:2.6px;top:-0.5px;border-left:7px solid #555;border-top:4px solid transparent;border-bottom:4px solid transparent"></span></span><span class="pv"> 0;</span></div>
<div class="m" style="left:788.0px;top:180.3px;line-height:14px;"><span class="pn">padding</span><span class="pv">:</span><span style="display:inline-block;width:7.2px;height:8px;position:relative"><span style="position:absolute;left:2.6px;top:-0.5px;border-left:7px solid #555;border-top:4px solid transparent;border-bottom:4px solid transparent"></span></span><span class="pv"> 0;</span></div>
<div class="m" style="left:770.0px;top:194.0px;line-height:14px;"><span class="pv">}</span></div>
<div class="a" style="left:766px;top:212.3px;width:431px;height:1px;background:#e4e4e4"></div>
<div class="m" style="left:770.0px;top:216.0px;line-height:14px;"><span class="pv">* {</span></div>
<div class="m" style="left:971px;top:216px;line-height:14px;color:#333;text-decoration:underline">/Users/crifan/d…common.less:15</div>
<div class="m" style="left:788.0px;top:230.5px;line-height:14px;"><span class="pn">box-sizing</span><span class="pv">: border-box;</span></div>
<div class="m" style="left:770.0px;top:244.8px;line-height:14px;"><span class="pv">}</span></div>
<div class="a" style="left:766px;top:262.7px;width:431px;height:52px;background:#eeeeee;border-top:1px solid #e4e4e4"></div>
<div class="m" style="left:770.0px;top:266.5px;line-height:14px;"><span class="pv">i,</span><span style="color:#888"> cite, em, var, address, dfn </span><span class="pv">{</span></div>
<div class="m" style="left:1036px;top:266.5px;line-height:14px;color:#222">user agent stylesheet</div>
<div class="m" style="left:788.0px;top:282.3px;line-height:14px;"><span class="pn">font-style</span><span class="pv">: italic;</span></div>
<div class="m" style="left:770.0px;top:296.0px;line-height:14px;"><span class="pv">}</span></div>
<div class="a" style="left:766px;top:314.4px;width:431px;height:16.5px;background:#e0e0e0"></div>
<div class="s" style="left:770px;top:315.5px;font-size:12px;line-height:15px;color:#333">Inherited from</div>
<div class="a" style="left:849.5px;top:315px;width:130px;height:16px;background:#fff;border:1px solid #d4d4d4;border-radius:2px"></div>
<div class="m" style="left:853px;top:316px;line-height:14px"><span class="tg">button</span><span class="at">.next-month</span></div>
<div class="m" style="left:770.0px;top:334.8px;line-height:14px;"><span class="pv">.m-calendar .toolbar button</span></div>
<div class="m" style="left:971px;top:335px;line-height:14px;color:#333;text-decoration:underline">/Users/crifan/d…t-moment.css:1</div>
<div class="m" style="left:770.0px;top:349.0px;line-height:14px;"><span class="pv">{</span></div>
<div class="m" style="left:788.0px;top:364.5px;line-height:14px;"><span style="color:#e28484">position</span><span style="color:#999">: relative;</span></div>
<div class="m" style="left:788.0px;top:378.5px;line-height:14px;"><span style="color:#e28484">width</span><span style="color:#999">: 30px;</span></div>
<div class="m" style="left:788.0px;top:392.5px;line-height:14px;"><span style="color:#e28484">height</span><span style="color:#999">: 30px;</span></div>
<div class="m" style="left:788.0px;top:406.5px;line-height:14px;"><span class="pn">line-height</span><span class="pv">: 30px;</span></div>
<div class="m" style="left:788.0px;top:420.8px;line-height:14px;"><span class="pn">color</span><span class="pv">: </span><span style="display:inline-block;width:10px;height:10px;border:1px solid #888;background:#fff;vertical-align:-1px;margin-right:2px"></span><span class="pv">#fff;</span></div>
<div class="m" style="left:788.0px;top:435.0px;line-height:14px;"><span style="color:#e28484">border</span><span style="color:#999">:</span><span style="display:inline-block;width:7.2px;height:8px;position:relative"><span style="position:absolute;left:2.6px;top:-0.5px;border-left:7px solid #999;border-top:4px solid transparent;border-bottom:4px solid transparent"></span></span><span style="color:#999"> 1px solid </span><span style="display:inline-block;width:10px;height:10px;background:#89b5ee;vertical-align:-1px;margin-right:2px"></span><span style="color:#999">#1385e5;</span></div>
<div class="m" style="left:788.0px;top:449.0px;line-height:14px;"><span style="color:#e28484">border-radius</span><span style="color:#999">:</span><span style="display:inline-block;width:7.2px;height:8px;position:relative"><span style="position:absolute;left:2.6px;top:-0.5px;border-left:7px solid #999;border-top:4px solid transparent;border-bottom:4px solid transparent"></span></span><span style="color:#999"> 50%;</span></div>
<div class="m" style="left:788.0px;top:463.0px;line-height:14px;"><span style="color:#e28484">background</span><span style="color:#999">:</span><span style="display:inline-block;width:7.2px;height:8px;position:relative"><span style="position:absolute;left:2.6px;top:-0.5px;border-left:7px solid #999;border-top:4px solid transparent;border-bottom:4px solid transparent"></span></span><span style="color:#999"> </span><span style="display:inline-block;width:10px;height:10px;background:#89b5ee;vertical-align:-1px;margin-right:2px"></span><span style="color:#999">#1385e5;</span></div>
<div class="m" style="left:788.0px;top:477.0px;line-height:14px;"><span class="pn">font-size</span><span class="pv">: 20px;</span></div>
<div class="a" style="left:1190px;top:84px;width:7px;height:403px;background:#f7f7f7;border-left:1px solid #e6e6e6"></div>
<div class="a" style="left:1193.5px;top:88px;width:8px;height:71px;background:#c1c1c1;border-radius:4px"></div>
<div class="a" style="left:390px;top:486px;width:807px;height:247px;background:#fff;border-top:1px solid #bdbdbd"></div>
<div class="a" style="left:390px;top:487px;width:807px;height:27px;background:#f3f3f3;border-bottom:1px solid #ccc"></div>
<svg class="a" style="left:402px;top:493px" width="8" height="16" viewBox="0 0 8 16"><g fill="#555"><circle cx="4" cy="2.5" r="1.5"/><circle cx="4" cy="7.5" r="1.5"/><circle cx="4" cy="12.5" r="1.5"/></g></svg>
<div class="a" style="left:423.5px;top:489.3px;width:54.5px;height:25px;background:#fff;border:1px solid #ccc;border-bottom:none"></div>
<div class="s" style="left:428.4px;top:492.5px;font-size:12px;line-height:16px;color:#333">Console</div>
<div class="s" style="left:483.2px;top:492.5px;font-size:12px;line-height:16px;color:#333">What's New</div>
<div class="s" style="left:573.4px;top:492.5px;font-size:12px;line-height:16px;color:#333">Remote devices</div>
<svg class="a" style="left:1183px;top:494px" width="12" height="12" viewBox="0 0 12 12"><path d="M1 1L11 11M11 1L1 11" stroke="#555" stroke-width="1.5"/></svg>
<div class="a" style="left:390px;top:540px;width:807px;height:1px;background:#ddd"></div>
<svg class="a" style="left:397px;top:520px" width="17" height="15" viewBox="0 0 17 15"><rect x="0.7" y="0.7" width="15" height="13" fill="none" stroke="#666" stroke-width="1.2"/><path d="M4.5 1V14" stroke="#666" stroke-width="1.2"/><path d="M7.5 4L12 7.2L7.5 10.4Z" fill="#666"/></svg>
<svg class="a" style="left:427px;top:520px" width="15" height="15" viewBox="0 0 15 15"><circle cx="7.5" cy="7.5" r="5.9" fill="none" stroke="#555" stroke-width="1.6"/><path d="M3.4 3.4L11.6 11.6" stroke="#555" stroke-width="1.6"/></svg>
<div class="a" style="left:452.5px;top:519px;width:1px;height:16px;background:#ccc"></div>
<div class="s" style="left:462px;top:519px;font-size:12px;line-height:16px;color:#333">top</div>
<svg class="a" style="left:582px;top:522px" width="9" height="8" viewBox="0 0 9 8"><path d="M0.5 0.5H8.5L4.5 7.5Z" fill="#555"/></svg>
<div class="a" style="left:599.5px;top:519px;width:1px;height:16px;background:#ccc"></div>
<div class="a" style="left:607px;top:518px;width:166px;height:19px;background:#fff;border:1px solid #d0d0d0;border-radius:2px"></div>
<div class="s" style="left:611px;top:519.5px;font-size:12px;line-height:16px;color:#757575">Filter</div>
<div class="s" style="left:780.7px;top:519px;font-size:12px;line-height:16px;color:#333">All levels</div>
<svg class="a" style="left:831px;top:522px" width="9" height="8" viewBox="0 0 9 8"><path d="M0.5 0.5H8.5L4.5 7.5Z" fill="#555"/></svg>
<div class="a" style="left:850px;top:521px;width:12px;height:12px;background:#2f80ed;border-radius:2px"></div>
<svg class="a" style="left:850px;top:521px" width="12" height="12" viewBox="0 0 12 12"><path d="M2.5 6.2L5 8.7L9.7 3.5" fill="none" stroke="#fff" stroke-width="1.5"/></svg>
<div class="s" style="left:868px;top:519px;font-size:12px;line-height:16px;color:#333">Group similar</div>
<svg class="a" style="left:1181px;top:519px" width="15" height="15" viewBox="0 0 15 15"><path fill="#555" fill-rule="evenodd" d="M6.3 0.5H8.7L9.1 2.4L10.6 3.1L12.2 2L13.9 3.7L12.8 5.3L13.4 6.8L15.3 7.2V9.6L13.4 10L12.8 11.5L13.9 13.1L12.2 14.8L10.6 13.7L9.1 14.3L8.7 16.2H6.3L5.9 14.3L4.4 13.7L2.8 14.8L1.1 13.1L2.2 11.5L1.6 10L-0.3 9.6V7.2L1.6 6.8L2.2 5.3L1.1 3.7L2.8 2L4.4 3.1L5.9 2.4ZM7.5 5.6A2.8 2.8 0 1 0 7.5 11.2A2.8 2.8 0 1 0 7.5 5.6Z" transform="scale(0.92) translate(0.6,-0.5)"/></svg>
<div class="m" style="left:414.7px;top:543.3px;line-height:14px;color:#222">onCancelPopup</div>
<div class="m" style="left:1038px;top:543.3px;line-height:14px;color:#333;text-decoration:underline">index.js?7207:133</div>
<div class="a" style="left:390px;top:557.5px;width:800px;height:1px;background:#eee"></div>
<div class="m" style="left:414.7px;top:561.5px;line-height:14px;color:#222">toggleSwitchtime: this.state.isSelectTimeVisible=false</div>
<div class="m" style="left:1038px;top:561.5px;line-height:14px;color:#333;text-decoration:underline">index.js?7207:150</div>
<div class="a" style="left:390px;top:576.0px;width:800px;height:33px;background:#ffebeb;border-top:1px solid #fcd2d2"></div>
<svg class="a" style="left:397.1px;top:580.3px" width="10" height="10" viewBox="0 0 10 10"><circle cx="5" cy="5" r="4.9" fill="#d7263a"/><path d="M3.2 3.2L6.8 6.8M6.8 3.2L3.2 6.8" stroke="#fff" stroke-width="1.4" stroke-linecap="round"/></svg>
<svg class="a" style="left:414.9px;top:582.3px" width="8" height="9" viewBox="0 0 8 9"><path d="M0 0.3L6.8 4.1L0 7.9Z" fill="#555"/></svg>
<div class="m" style="left:424.4px;top:580.0px;line-height:14px;color:#f00">GET <span style="color:#333;text-decoration:underline">http://localhost:8080/sockjs-node/info?t=1521812182920</span></div>
<div class="m" style="left:414.7px;top:594.2px;line-height:14px;color:#f00">net::ERR_CONNECTION_REFUSED</div>
<div class="m" style="left:987.4px;top:580.0px;line-height:14px;color:#333;text-decoration:underline">abstract-xhr.js?24cb:132</div>
<div class="a" style="left:390px;top:609.0px;width:800px;height:33px;background:#ffebeb;border-top:1px solid #fcd2d2"></div>
<svg class="a" style="left:397.1px;top:613.3px" width="10" height="10" viewBox="0 0 10 10"><circle cx="5" cy="5" r="4.9" fill="#d7263a"/><path d="M3.2 3.2L6.8 6.8M6.8 3.2L3.2 6.8" stroke="#fff" stroke-width="1.4" stroke-linecap="round"/></svg>
<svg class="a" style="left:414.9px;top:615.3px" width="8" height="9" viewBox="0 0 8 9"><path d="M0 0.3L6.8 4.1L0 7.9Z" fill="#555"/></svg>
<div class="m" style="left:424.4px;top:613.0px;line-height:14px;color:#f00">GET <span style="color:#333;text-decoration:underline">http://localhost:8080/sockjs-node/info?t=1521812310944</span></div>
<div class="m" style="left:414.7px;top:627.2px;line-height:14px;color:#f00">net::ERR_CONNECTION_REFUSED</div>
<div class="m" style="left:987.4px;top:613.0px;line-height:14px;color:#333;text-decoration:underline">abstract-xhr.js?24cb:132</div>
<div class="a" style="left:390px;top:642.0px;width:800px;height:33px;background:#ffebeb;border-top:1px solid #fcd2d2"></div>
<svg class="a" style="left:397.1px;top:646.3px" width="10" height="10" viewBox="0 0 10 10"><circle cx="5" cy="5" r="4.9" fill="#d7263a"/><path d="M3.2 3.2L6.8 6.8M6.8 3.2L3.2 6.8" stroke="#fff" stroke-width="1.4" stroke-linecap="round"/></svg>
<svg class="a" style="left:414.9px;top:648.3px" width="8" height="9" viewBox="0 0 8 9"><path d="M0 0.3L6.8 4.1L0 7.9Z" fill="#555"/></svg>
<div class="m" style="left:424.4px;top:646.0px;line-height:14px;color:#f00">GET <span style="color:#333;text-decoration:underline">http://localhost:8080/sockjs-node/info?t=1521812567013</span></div>
<div class="m" style="left:414.7px;top:660.2px;line-height:14px;color:#f00">net::ERR_CONNECTION_REFUSED</div>
<div class="m" style="left:987.4px;top:646.0px;line-height:14px;color:#333;text-decoration:underline">abstract-xhr.js?24cb:132</div>
<div class="a" style="left:390px;top:675.0px;width:800px;height:33px;background:#ffebeb;border-top:1px solid #fcd2d2"></div>
<svg class="a" style="left:397.1px;top:679.3px" width="10" height="10" viewBox="0 0 10 10"><circle cx="5" cy="5" r="4.9" fill="#d7263a"/><path d="M3.2 3.2L6.8 6.8M6.8 3.2L3.2 6.8" stroke="#fff" stroke-width="1.4" stroke-linecap="round"/></svg>
<svg class="a" style="left:414.9px;top:681.3px" width="8" height="9" viewBox="0 0 8 9"><path d="M0 0.3L6.8 4.1L0 7.9Z" fill="#555"/></svg>
<div class="m" style="left:424.4px;top:679.0px;line-height:14px;color:#f00">GET <span style="color:#333;text-decoration:underline">http://localhost:8080/sockjs-node/info?t=1521813079102</span></div>
<div class="m" style="left:414.7px;top:693.2px;line-height:14px;color:#f00">net::ERR_CONNECTION_REFUSED</div>
<div class="m" style="left:987.4px;top:679.0px;line-height:14px;color:#333;text-decoration:underline">abstract-xhr.js?24cb:132</div>
<div class="a" style="left:390px;top:708px;width:800px;height:1px;background:#fcd2d2"></div>
<svg class="a" style="left:399px;top:713px" width="8" height="10" viewBox="0 0 8 10"><path d="M1.5 1L6 5L1.5 9" fill="none" stroke="#3b7de9" stroke-width="1.5"/></svg>
<div class="a" style="left:1190px;top:541px;width:7px;height:192px;background:#fafafa"></div>
<div class="a" style="left:1191px;top:712px;width:6px;height:21px;background:#c8c8c8;border-radius:3px"></div>
</body></html>
